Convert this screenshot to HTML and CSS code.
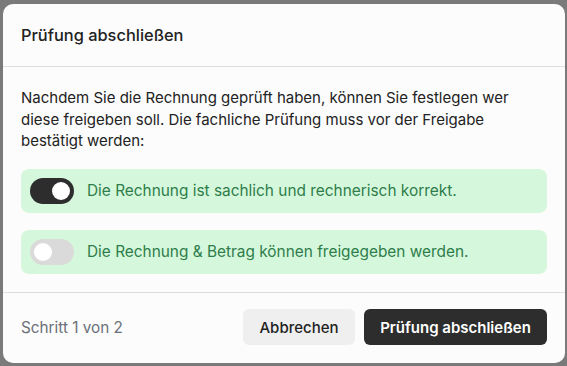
FILE: index.html
```html
<!DOCTYPE html>
<html lang="de">
<head>
<meta charset="utf-8">
<link rel="stylesheet" href="styles.css">
</head>
<body>
<div class="dialog">
  <div class="header"><h2 class="title">Prüfung abschließen</h2></div>
  <div class="content">
    <p class="intro">Nachdem Sie die Rechnung geprüft haben, können Sie festlegen wer diese freigeben soll. Die fachliche Prüfung muss vor der Freigabe bestätigt werden:</p>
    <div class="option">
      <span class="toggle on"><span class="knob"></span></span>
      <span class="label">Die Rechnung ist sachlich und rechnerisch korrekt.</span>
    </div>
    <div class="option">
      <span class="toggle"><span class="knob"></span></span>
      <span class="label">Die Rechnung &amp; Betrag können freigegeben werden.</span>
    </div>
  </div>
  <div class="footer">
    <span class="step">Schritt 1 von 2</span>
    <div class="actions">
      <button class="btn secondary">Abbrechen</button>
      <button class="btn primary">Prüfung abschließen</button>
    </div>
  </div>
</div>
</body>
</html>
```
FILE: styles.css
```css
html, body { margin: 0; padding: 0; }
body {
  background: #7a7a7a;
  font-family: Inter, "Noto Sans", sans-serif;
  width: 567px;
  height: 366px;
  overflow: hidden;
  padding: 4px 0 0 3px;
  box-sizing: border-box;
}
.dialog {
  width: 562px;
  height: 359px;
  background: #fcfcfc;
  border-radius: 10px;
  display: flex;
  flex-direction: column;
  overflow: hidden;
}
.header {
  height: 63px;
  flex: none;
  border-bottom: 1px solid #dedede;
  display: flex;
  align-items: center;
  padding: 0 18px;
  box-sizing: border-box;
}
.title {
  margin: 0;
  font-size: 16.4px;
  font-weight: 500;
  color: #222;
}
.content {
  padding: 20px 18px 18px;
  display: flex;
  flex-direction: column;
  gap: 17px;
  border-bottom: 1px solid #dedede;
  flex: none;
}
.intro {
  margin: 0;
  font-size: 15px;
  line-height: 21.5px;
  color: #222;
}
.option {
  height: 44px;
  background: #d5f8dc;
  border-radius: 8px;
  display: flex;
  align-items: center;
  padding: 0 9px;
  gap: 13px;
}
.toggle {
  width: 44px;
  height: 26px;
  border-radius: 13px;
  background: #dadada;
  position: relative;
  flex: none;
}
.toggle.on { background: #2d2d2d; }
.knob {
  position: absolute;
  top: 4px;
  left: 4px;
  width: 18px;
  height: 18px;
  border-radius: 50%;
  background: #fff;
}
.toggle.on .knob { left: 22px; }
.label {
  font-size: 15.4px;
  color: #2e7d4a;
}
.footer {
  flex: 1;
  display: flex;
  align-items: center;
  justify-content: space-between;
  padding: 0 18px 1px;
}
.step {
  font-size: 15.3px;
  color: #6b7078;
}
.actions { display: flex; gap: 9px; }
.btn {
  height: 36px;
  border: none;
  border-radius: 6px;
  font-family: Inter, "Noto Sans", sans-serif;
  font-size: 15px;
  font-weight: 500;
  padding: 0;
}
.btn.secondary { background: #efefef; color: #222; width: 112px; }
.btn.primary { background: #2d2d2d; color: #fff; width: 183px; font-weight: 600; }
```
